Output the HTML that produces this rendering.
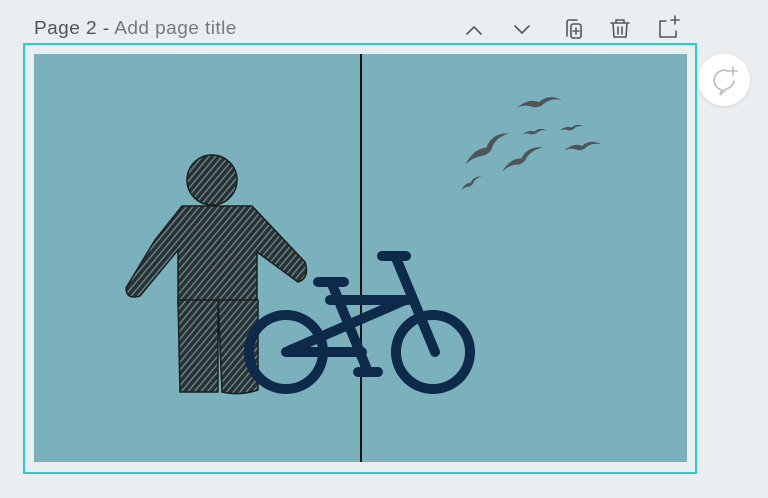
<!DOCTYPE html>
<html><head><meta charset="utf-8"><style>
html,body{margin:0;padding:0;width:768px;height:498px;overflow:hidden;background:#ebeef1;font-family:"Liberation Sans",sans-serif}
.t{position:absolute;left:34px;top:18px;font-size:18px;color:#767a7e;letter-spacing:0.4px;transform:scaleX(1.06);transform-origin:left}
.t b{font-weight:normal;color:#4f5357}
.frame{position:absolute;left:23px;top:43px;width:670px;height:427px;border:2px solid #27cfd3}
.cv{position:absolute;left:34px;top:54px;width:653px;height:408px;background:#7bb1bd}
.cb{position:absolute;left:698px;top:54px;width:52px;height:52px;border-radius:50%;background:#fff;box-shadow:0 1px 3px rgba(0,0,0,.12)}
</style></head><body>
<div class="t"><b>Page 2 -</b> Add page title</div>
<svg style="position:absolute;left:0;top:0" width="768" height="60" fill="none" stroke="#55595d" stroke-width="1.6" stroke-linecap="round" stroke-linejoin="round">
<path d="M467 34 L474 27 L481 34"/>
<path d="M515 26 L522 33 L529 26"/>
<path d="M567 36 V22 a2 2 0 0 1 2-2 h8"/>
<rect x="571" y="24" width="10" height="14" rx="2"/>
<path d="M576 28 v6 M573 31 h6"/>
<path d="M611 23 h18 M616 23 v-3 h8 v3 M613 23 l1 14 h12 l1-14 M618 27 v7 M622 27 v7"/>
<path d="M666 21 h-6 v16 h16 v-6"/><path d="M671 20 h8 M675 16 v8"/>
</svg>
<div class="frame"></div>
<div class="cv"></div>
<svg style="position:absolute;left:0;top:0" width="768" height="498">
<line x1="361" y1="54" x2="361" y2="462" stroke="#111" stroke-width="2"/>
<defs><pattern id="h" width="5" height="5" patternUnits="userSpaceOnUse" patternTransform="rotate(40)"><rect width="5" height="5" fill="#2a3234"/><rect width="1.3" height="5" fill="#6d8c93"/></pattern></defs>
<g fill="url(#h)" stroke="#1a1f20" stroke-width="1.5">
<circle cx="212" cy="180" r="25"/>
<path d="M182 206 H252 L305 262 Q310 278 298 282 L257 252 V305 H178 V250 L140 296 Q126 300 126 288 L155 240 Z"/>
<path d="M178 300 H218 V392 H180 Z M218 300 H258 V390 Q240 396 222 392 Z"/>
</g>
<g stroke="#0d2a4b" stroke-width="10" fill="none" stroke-linecap="round">
<circle cx="286" cy="352" r="37"/>
<circle cx="433" cy="352" r="37"/>
<path d="M286 352 H362 M405 300 L286 352 M330 300 H408 M318 282 H344 M332 284 L368 372 M358 372 H378 M382 256 H406 M396 258 L435 352"/>
</g>
<g fill="#4e5659">
<path transform="translate(540,101) scale(1.1)" d="M-21 6 Q-10 -3 -1 1 Q8 -7 20 -1 Q8 -3 2 4 Q-4 7 -8 5 Q-14 3 -21 6Z"/>
<path transform="translate(487,146) rotate(-25) scale(1.1)" d="M-25 7 Q-12 -3 -1 1 Q9 -9 23 -2 Q9 -4 2 5 Q-4 8 -9 6 Q-16 4 -25 7Z"/>
<path transform="translate(535,131) scale(.6)" d="M-21 6 Q-10 -3 -1 1 Q8 -7 20 -1 Q8 -3 2 4 Q-4 7 -8 5 Q-14 3 -21 6Z"/>
<path transform="translate(572,127) scale(.6)" d="M-21 6 Q-10 -3 -1 1 Q8 -7 20 -1 Q8 -3 2 4 Q-4 7 -8 5 Q-14 3 -21 6Z"/>
<path transform="translate(583,145) scale(.9)" d="M-21 6 Q-10 -3 -1 1 Q8 -7 20 -1 Q8 -3 2 4 Q-4 7 -8 5 Q-14 3 -21 6Z"/>
<path transform="translate(522,157) rotate(-20) scale(1.05)" d="M-23 7 Q-11 -3 -1 1 Q8 -8 22 -2 Q8 -3 2 4 Q-4 7 -8 5 Q-15 3 -23 7Z"/>
<path transform="translate(471,182) rotate(-25) scale(.6)" d="M-21 6 Q-10 -3 -1 1 Q8 -7 20 -1 Q8 -3 2 4 Q-4 7 -8 5 Q-14 3 -21 6Z"/>
</g>
</svg>
<div class="cb"></div>
<svg style="position:absolute;left:698px;top:54px" width="52" height="52" fill="none" stroke="#b9bcc0" stroke-width="1.6" stroke-linecap="round">
<path d="M30 17 A10 10 0 1 0 24 36 L22 41 L28 35 A10 10 0 0 0 36 27"/>
<path d="M35 13 v8 M31 17 h8"/>
</svg>
</body></html>
